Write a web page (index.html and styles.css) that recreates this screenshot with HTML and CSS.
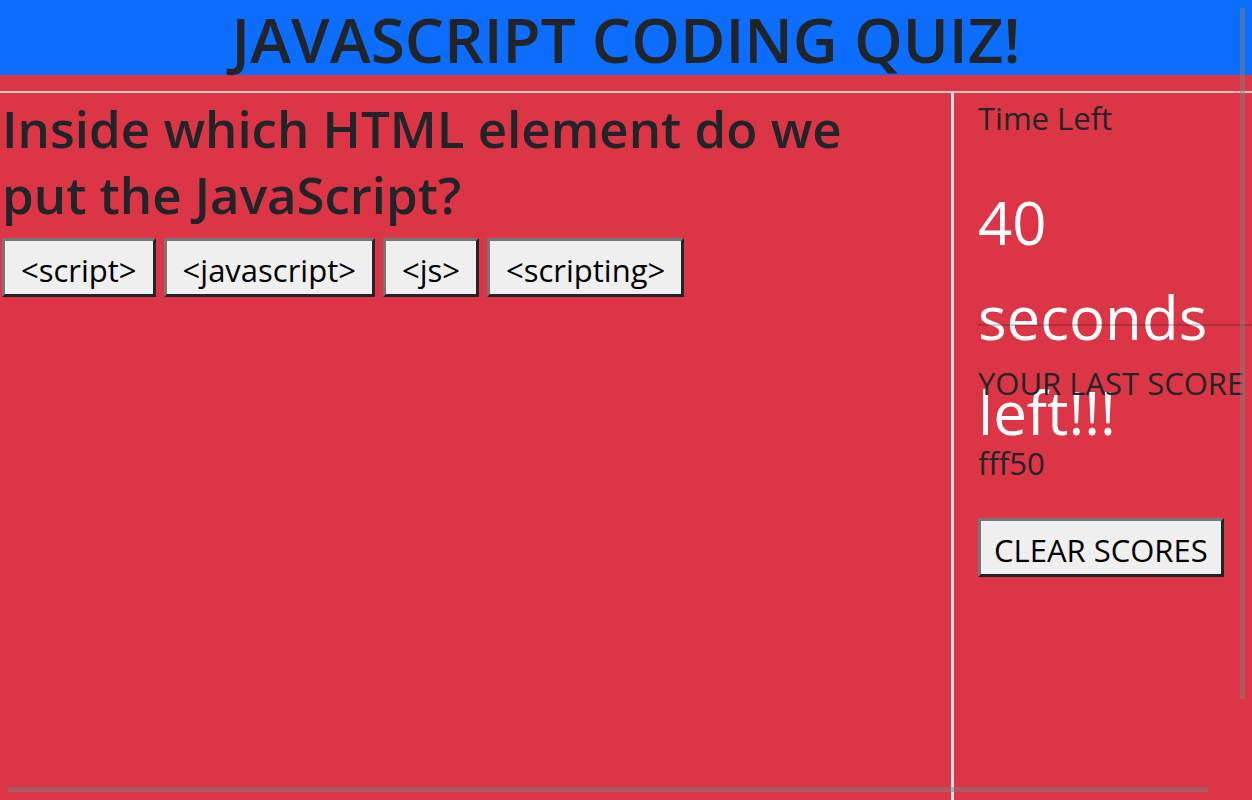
FILE: index.html
```html
<!DOCTYPE html>
<html lang="en">
<head>
<meta charset="utf-8">
<meta name="viewport" content="width=device-width, initial-scale=1">
<title>JavaScript Coding Quiz</title>
<link rel="stylesheet" href="styles.css">
</head>
<body>
<header class="banner"><h1 class="banner-title">JAVASCRIPT CODING QUIZ!</h1></header>
<div class="board">
<main class="quiz">
<h2 class="question">Inside which HTML element do we put the JavaScript?</h2>
<div class="answers">
<button class="btn" type="button">&lt;script&gt;</button>
<button class="btn" type="button">&lt;javascript&gt;</button>
<button class="btn" type="button">&lt;js&gt;</button>
<button class="btn" type="button">&lt;scripting&gt;</button>
</div>
</main>
<aside class="side">
<p class="label">Time Left</p>
<div class="timer">40 seconds left!!!</div>
<hr class="rule">
<p class="label scores-label">YOUR LAST SCORE</p>
<p class="score">fff50</p>
<button class="btn btn-clear" type="button">CLEAR SCORES</button>
</aside>
</div>
<div class="scroll-y" aria-hidden="true"></div>
<div class="scroll-x" aria-hidden="true"></div>
</body>
</html>
```
FILE: styles.css
```css
* { box-sizing: border-box; }
body {
  margin: 0;
  min-height: 100vh;
  display: flex;
  flex-direction: column;
  overflow: hidden;
  background: #dc3545;
  color: #212529;
  font-family: "Segoe UI", "Open Sans", "Noto Sans", sans-serif;
  font-size: 31px;
  line-height: 48px;
}
h1, h2, p { margin: 0; }
.banner {
  background: #0d6efd;
  text-align: center;
  padding-top: 3px;
}
.banner-title {
  font-size: 62px;
  line-height: 72px;
  font-weight: 600;
}
.board {
  flex: 1;
  display: grid;
  grid-template-columns: minmax(0, 1fr) 301px;
  margin-top: 16px;
  border-top: 2px solid #e5bfc4;
}
.quiz {
  padding: 2px 86px 0 2px;
}
.question {
  font-size: 51px;
  line-height: 66px;
  font-weight: 600;
}
.answers {
  display: flex;
  flex-wrap: wrap;
  gap: 8px;
  margin-top: 11px;
}
.btn {
  height: 59px;
  padding: 4px 16px 0;
  border: 3px solid;
  border-color: #767676 #212529 #212529 #767676;
  background: #efefef;
  color: #000;
  font: inherit;
  white-space: nowrap;
}
.side {
  padding: 1px 0 0 24px;
  border-left: 3px solid #dee2e6;
  white-space: nowrap;
}
.timer {
  height: 149px;
  margin-top: 33px;
  color: #fff;
  font-size: 60px;
  line-height: 95px;
  white-space: normal;
}
.rule {
  height: 2px;
  margin: 0;
  border: 0;
  color: inherit;
  background: currentColor;
  opacity: 0.25;
}
.scores-label { margin-top: 33px; }
.score { margin-top: 32px; }
.btn-clear {
  margin-top: 31px;
  padding: 4px 13px 0;
}
.scroll-y, .scroll-x {
  position: fixed;
  background: rgba(128, 128, 128, 0.5);
}
.scroll-y {
  top: 8px;
  right: 7px;
  bottom: 101px;
  width: 5px;
}
.scroll-x {
  left: 8px;
  right: 44px;
  bottom: 8px;
  height: 5px;
}
```
